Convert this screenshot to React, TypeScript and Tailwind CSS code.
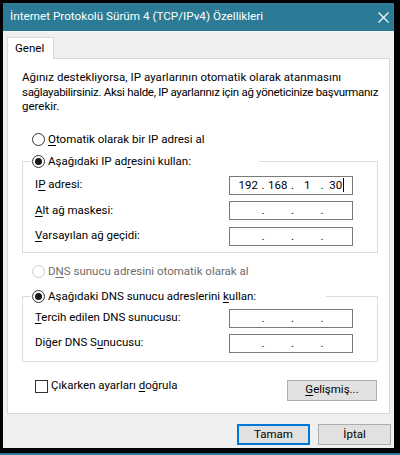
import React from "react";

const F = { fontFamily: "Roboto, 'Noto Sans', sans-serif" };

function U({ children }: { children: React.ReactNode }) {
  return <span className="underline decoration-1 underline-offset-[2px]">{children}</span>;
}

function Radio({ checked, disabled }: { checked?: boolean; disabled?: boolean }) {
  return (
    <span
      className={
        disabled
          ? "w-[13px] h-[13px] rounded-full border border-[#cccccc] bg-white flex items-center justify-center shrink-0"
          : "w-[13px] h-[13px] rounded-full border border-[#333333] bg-white flex items-center justify-center shrink-0"
      }
    >
      {checked && <span className="w-[7px] h-[7px] rounded-full bg-[#1a1a1a]" />}
    </span>
  );
}

function IpBox({ parts, cursor }: { parts: string[]; cursor?: boolean }) {
  return (
    <div className="w-[124px] h-[19px] border border-[#7a7a7a] bg-white flex items-center pl-[3.5px] text-black">
      {parts.map((p, i) => (
        <React.Fragment key={i}>
          <span className="w-[29.5px] text-center relative leading-[17px]">
            {p}
            {cursor && i === 3 && <span className="inline-block w-[1px] h-[14px] bg-black align-middle ml-[1px]" />}
          </span>
          {i < 3 && <span className="w-0 flex justify-center leading-[17px]">.</span>}
        </React.Fragment>
      ))}
    </div>
  );
}

function Row({ label, parts, cursor }: { label: React.ReactNode; parts: string[]; cursor?: boolean }) {
  return (
    <div className="flex items-center justify-between h-[19px]">
      <span>{label}</span>
      <IpBox parts={parts} cursor={cursor} />
    </div>
  );
}

export default function App() {
  const empty = ["", "", "", ""];
  return (
    <div className="w-[400px] h-[455px] bg-black flex flex-col" style={F}>
      <div className="pt-[3px] pl-[3px] pr-[6px] h-[448px] flex">
        <div className="w-[391px] h-[445px] flex flex-col bg-[#f0f0f0]">
          {/* title bar */}
          <div className="h-[28px] bg-[#2b7b96] flex items-center justify-between pl-[7px] pr-[5px] text-white text-[11.7px]">
            <span className="pb-[1px]">İnternet Protokolü Sürüm 4 (TCP/IPv4) Özellikleri</span>
            <svg width="11" height="11" viewBox="0 0 11 11">
              <path d="M0.5 0.5 L10.5 10.5 M10.5 0.5 L0.5 10.5" stroke="white" strokeWidth="1.1" />
            </svg>
          </div>
          {/* body */}
          <div className="flex-1 flex flex-col pl-[4px] pr-[4px] pt-[6px] text-[11.5px] text-black">
            <div className="flex">
              <div className="w-[47px] h-[22px] bg-white border border-[#d9d9d9] border-b-0 flex items-center pl-[7px] -mb-[1px] relative z-10">
                Genel
              </div>
            </div>
            <div className="h-[356px] bg-white border border-[#d9d9d9] flex flex-col pl-[14px] pr-[11px]">
              <p className="mt-[11px] leading-[14.5px] whitespace-nowrap">
                <span className="tracking-[0.05px]">Ağınız destekliyorsa, IP ayarlarının otomatik olarak atanmasını</span>
                <br />
                <span className="tracking-[-0.3px]">
                  sağlayabilirsiniz. Aksi halde, IP ayarlarınız için ağ yöneticinize başvurmanız
                </span>
                <br />
                gerekir.
              </p>
              <div className="mt-[18px] h-[16px] flex items-center gap-[3px] pl-[10px]">
                <Radio />
                <span>
                  <U>O</U>tomatik olarak bir IP adresi al
                </span>
              </div>
              <fieldset className="mt-[6px] border border-[#dcdcdc] pl-[12px] pr-[24px] pb-[6px]">
                <legend className="-ml-[4px] w-[228px] h-[16px] flex items-center gap-[3px] pl-[1px]">
                  <Radio checked />
                  <span>
                    Aşağıdaki IP ad<U>r</U>esini kullan:
                  </span>
                </legend>
                <div className="mt-[6px] flex flex-col gap-[6.5px]">
                  <Row label={<>I<U>P</U> adresi:</>} parts={["192", "168", "1", "30"]} cursor />
                  <Row label={<><U>A</U>lt ağ maskesi:</>} parts={empty} />
                  <Row label={<><U>V</U>arsayılan ağ geçidi:</>} parts={empty} />
                </div>
              </fieldset>
              <div className="mt-[11px] h-[16px] flex items-center gap-[3px] pl-[10px] text-[#6d6d6d]">
                <Radio disabled />
                <span>
                  D<U>N</U>S sunucu adresini otomatik olarak al
                </span>
              </div>
              <fieldset className="mt-[9px] border border-[#dcdcdc] pl-[12px] pr-[24px] pb-[8px]">
                <legend className="-ml-[4px] w-[295px] h-[16px] flex items-center gap-[3px] pl-[1px]">
                  <Radio checked />
                  <span>
                    Aşağıdaki DNS sunucu adreslerini <U>k</U>ullan:
                  </span>
                </legend>
                <div className="mt-[4px] flex flex-col gap-[6px]">
                  <Row label={<><U>T</U>ercih edilen DNS sunucusu:</>} parts={empty} />
                  <Row label={<>Diğer DNS S<U>u</U>nucusu:</>} parts={empty} />
                </div>
              </fieldset>
              <div className="mt-[18px] flex items-start justify-between pl-[13px] pr-[1px]">
                <div className="flex items-center gap-[3px] h-[13px]">
                  <span className="w-[13px] h-[13px] border border-[#333333] bg-white" />
                  <span>
                    Çıkarken ayarları <U>d</U>oğrula
                  </span>
                </div>
                <div className="w-[90px] h-[21px] bg-[#e1e1e1] border border-[#adadad] flex items-center justify-center">
                  <span>
                    <U>G</U>elişmiş...
                  </span>
                </div>
              </div>
            </div>
            <div className="flex justify-end gap-[8px] mt-[10px] -mr-[1px]">
              <div className="w-[73px] h-[21px] bg-[#e1e1e1] border-2 border-[#0078d7] flex items-center justify-center">
                Tamam
              </div>
              <div className="w-[73px] h-[21px] bg-[#e1e1e1] border border-[#adadad] flex items-center justify-center">
                İptal
              </div>
            </div>
          </div>
        </div>
      </div>
      <div className="flex-1" />
      <div className="h-[2px] bg-[#2b7b96]" />
    </div>
  );
}
